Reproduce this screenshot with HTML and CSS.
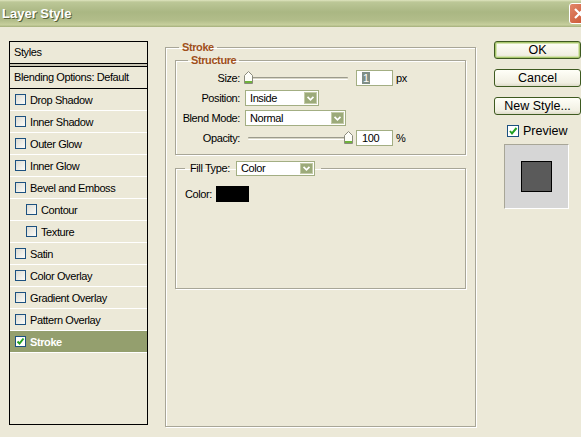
FILE: index.html
```html
<!DOCTYPE html>
<html>
  <head>
    <meta http-equiv="Content-type" content="text/html; charset=utf-8">
    <title>Layer Style</title>
    <link rel="stylesheet" href="styles.css">
  </head>
  <body>
    <div class="window">
      <div class="titlebar">
        <span class="title">Layer Style</span>
        <span class="close">
          <svg width="21" height="21" viewBox="0 0 21 21"><path d="M6 6 L15 15 M15 6 L6 15" stroke="#fff" stroke-width="2.2" fill="none"/></svg>
        </span>
      </div>
      <div class="body">
        <div class="styles_list">
          <div class="list_head">Styles</div>
          <div class="list_sep"></div>
          <div class="list_blend">Blending Options: Default</div>
          <div class="item"><span class="cb"></span>Drop Shadow</div>
          <div class="item"><span class="cb"></span>Inner Shadow</div>
          <div class="item"><span class="cb"></span>Outer Glow</div>
          <div class="item"><span class="cb"></span>Inner Glow</div>
          <div class="item"><span class="cb"></span>Bevel and Emboss</div>
          <div class="item sub"><span class="cb"></span>Contour</div>
          <div class="item sub"><span class="cb"></span>Texture</div>
          <div class="item"><span class="cb"></span>Satin</div>
          <div class="item"><span class="cb"></span>Color Overlay</div>
          <div class="item"><span class="cb"></span>Gradient Overlay</div>
          <div class="item"><span class="cb"></span>Pattern Overlay</div>
          <div class="item selected"><span class="cb"><svg width="9" height="9" viewBox="0 0 9 9"><path d="M1.5 4.5 L3.5 6.5 L7.5 1.5" stroke="#21a121" stroke-width="2" fill="none"/></svg></span>Stroke</div>
        </div>

        <div class="main">
          <fieldset class="group outer">
            <legend>Stroke</legend>
            <fieldset class="group structure">
              <legend>Structure</legend>
              <div class="row row_size">
                <span class="lbl">Size:</span>
                <div class="slider">
                  <div class="track"></div>
                  <span class="thumb thumb_left">
                    <svg width="9" height="13" viewBox="0 0 9 13"><polygon points="0.5,4.5 4.5,0.5 8.5,4.5 8.5,12.5 0.5,12.5" fill="#fdfdf8" stroke="#8a8a7c"/><rect x="1" y="10" width="7" height="2" fill="#6fb23c"/></svg>
                  </span>
                </div>
                <span class="num"><span class="sel_text">1</span></span>
                <span class="unit">px</span>
              </div>
              <div class="row row_pos">
                <span class="lbl">Position:</span>
                <span class="dropdown dd_pos">Inside<span class="dd_btn"><svg width="13" height="11" viewBox="0 0 13 11"><path d="M3 3.5 L6.5 7 L10 3.5" stroke="#fff" stroke-width="2" fill="none"/></svg></span></span>
              </div>
              <div class="row row_blend">
                <span class="lbl">Blend Mode:</span>
                <span class="dropdown dd_blend">Normal<span class="dd_btn"><svg width="13" height="11" viewBox="0 0 13 11"><path d="M3 3.5 L6.5 7 L10 3.5" stroke="#fff" stroke-width="2" fill="none"/></svg></span></span>
              </div>
              <div class="row row_opacity">
                <span class="lbl">Opacity:</span>
                <div class="slider">
                  <div class="track"></div>
                  <span class="thumb thumb_right">
                    <svg width="9" height="13" viewBox="0 0 9 13"><polygon points="0.5,4.5 4.5,0.5 8.5,4.5 8.5,12.5 0.5,12.5" fill="#fdfdf8" stroke="#8a8a7c"/><rect x="1" y="10" width="7" height="2" fill="#6fb23c"/></svg>
                  </span>
                </div>
                <span class="num">100</span>
                <span class="unit">%</span>
              </div>
            </fieldset>

            <fieldset class="group fill">
              <legend><span class="fill_lbl">Fill Type:</span><span class="dropdown dd_fill">Color<span class="dd_btn"><svg width="13" height="11" viewBox="0 0 13 11"><path d="M3 3.5 L6.5 7 L10 3.5" stroke="#fff" stroke-width="2" fill="none"/></svg></span></span></legend>
              <div class="color_row">
                <span class="color_lbl">Color:</span>
                <span class="swatch"></span>
              </div>
            </fieldset>
          </fieldset>
        </div>

        <div class="side">
          <div class="btn btn_default">OK</div>
          <div class="btn">Cancel</div>
          <div class="btn">New Style...</div>
          <div class="preview_check"><span class="cb cb_prev"><svg width="10" height="10" viewBox="0 0 10 10"><path d="M2 5 L4 7.5 L8.5 2" stroke="#21a121" stroke-width="2" fill="none"/></svg></span>Preview</div>
          <div class="preview_box"><span class="preview_sq"></span></div>
        </div>
      </div>
    </div>
  </body>
</html>
```

FILE: styles.css
```css
body,html {margin:0; height:100%;}
body {background:#ece9d8; font-family:"Liberation Sans", Arial, sans-serif; font-size:11px; letter-spacing:-0.4px; color:#000;}
.window {width:581px; height:437px; overflow:hidden; background:#ece9d8;}

.titlebar {height:27px; display:flex; align-items:center; justify-content:space-between;
  background:linear-gradient(#dfe5c0 0, #bcc797 2px, #aab783 45%, #b2bd8a 75%, #c7cf9d 92%, #a4ae7a 100%);}
.title {margin-left:2px; font-size:13px; font-weight:bold; letter-spacing:0; color:#fff; text-shadow:1px 1px 0 #56613a;}
.close {width:21px; height:21px; margin-right:-9px; border:1px solid #fff; border-radius:3px; background:linear-gradient(135deg, #e2876a, #c8502c); box-sizing:border-box; display:flex;}
.close svg {margin:-1px;}

.body {display:flex; align-items:flex-start; padding:14px 0 0 9px;}

/* left list */
.styles_list {width:139px; height:384px; box-sizing:border-box; border:1px solid #000; flex:none;}
.list_head {height:21px; line-height:20px; padding-left:4px;}
.list_sep {height:2px; border-top:1px solid #000; border-bottom:1px solid #000; background:#c9c6b4;}
.list_blend {height:21px; line-height:20px; padding-left:4px; border-bottom:1px solid #000;}
.item {height:21px; display:flex; align-items:center; padding-left:5px; border-bottom:1px solid #fff;}
.item.sub {padding-left:16px;}
.item.selected {background:#949f6e; color:#fff; font-weight:bold;}
.cb {width:11px; height:11px; box-sizing:border-box; border:1px solid #1c5180; margin-right:4px;
  background:linear-gradient(135deg, #dcdcd4, #fbfbf8); display:inline-flex; align-items:center; justify-content:center; flex:none;}
.item.selected .cb {background:#fff;}

/* middle panel */
.main {margin-left:17px; width:311px; flex:none;}
.group {margin:0; padding:0; min-inline-size:auto; border:1px solid #a8a697; box-shadow:inset 1px 1px 0 #fff, 1px 1px 0 #fff;}
.group legend {padding:0 3px; line-height:13px; font-weight:bold; color:#a0501c;}
.outer {width:311px; height:386px; box-sizing:border-box; padding:0 9px;}
.outer > legend {margin-left:4px;}
.structure {width:291px; box-sizing:border-box; padding:3px 0 8px 0;}
.structure > legend {margin-left:12px;}

.row {display:flex; align-items:center;}
.row_size {height:16px;}
.row_pos {height:16px; margin-top:4px;}
.row_blend {height:16px; margin-top:4px;}
.row_opacity {height:16px; margin-top:4px;}
.lbl {width:64px; text-align:right; margin-right:4px; flex:none;}

.slider {position:relative; width:109px; height:16px; flex:none;}
.track {position:absolute; left:4px; right:5px; top:7px; height:1px; border-top:1px solid #9c9b8d; border-bottom:1px solid #fff; background:#d8d6c6; border-radius:1px;}
.thumb {position:absolute; top:1px; width:9px; height:13px;}
.thumb_left {left:0;}
.thumb_right {right:0;}
.thumb svg {display:block;}

.num {width:37px; height:16px; box-sizing:border-box; margin-left:3px; border:1px solid #a3ae83; background:#fff; padding-left:5px; line-height:14px;}
.sel_text {background:#7f8e86; color:#fff; padding:0 1px;}
.unit {margin-left:3px;}

.dropdown {position:relative; display:inline-flex; align-items:center; height:16px; box-sizing:border-box; border:1px solid #a3ae83; background:#fff; padding-left:4px; font-weight:normal; color:#000; flex:none;}
.dd_pos {width:74px; margin-left:1px;}
.dd_blend {width:101px; margin-left:1px;}
.dd_fill {width:79px; height:15px;}
.dd_btn {position:absolute; right:1px; top:1px; bottom:1px; width:13px; background:#9caa7a; border:1px solid #c3cba7; box-sizing:border-box; display:flex; align-items:center; justify-content:center;}
.dd_btn svg {display:block;}

.fill {width:291px; height:128px; box-sizing:border-box; margin-top:6px; padding:0 0 0 9px;}
.fill > legend {display:flex; align-items:center; margin-left:0; padding:0 6px 0 5px; line-height:15px;}
.fill_lbl {display:inline-block; width:46px; font-weight:normal; color:#000;}
.color_row {display:flex; align-items:center; margin-top:10px;}
.color_lbl {display:inline-block; width:31px;}
.swatch {width:33px; height:16px; background:#000;}

/* right column */
.side {margin-left:18px; width:87px; flex:none; display:flex; flex-direction:column;}
.btn {height:18px; box-sizing:border-box; border:1px solid #3e5a20; border-radius:3px; text-align:center; font-size:12.5px; letter-spacing:0; line-height:16px;
  background:linear-gradient(#fffff8, #f1efe2 80%, #dedbc9); margin-bottom:10px;}
.btn_default {box-shadow:inset 0 0 0 1px #a8c66c, inset 0 0 0 2px #d5e3b0;}
.preview_check {display:flex; align-items:center; margin:-1px 0 0 13px; font-size:12.5px; letter-spacing:0; height:14px;}
.cb_prev {width:12px; height:12px; background:#fff; margin-right:4px;}
.preview_box {width:65px; height:65px; box-sizing:border-box; margin:6px 0 0 10px; background:#d6d6d6;
  border-top:1px solid #a8a697; border-left:1px solid #a8a697; border-right:1px solid #fff; border-bottom:1px solid #fff;
  display:flex; align-items:center; justify-content:center;}
.preview_sq {width:31px; height:31px; box-sizing:border-box; border:1px solid #000; background:#5a5a5a;}
```
